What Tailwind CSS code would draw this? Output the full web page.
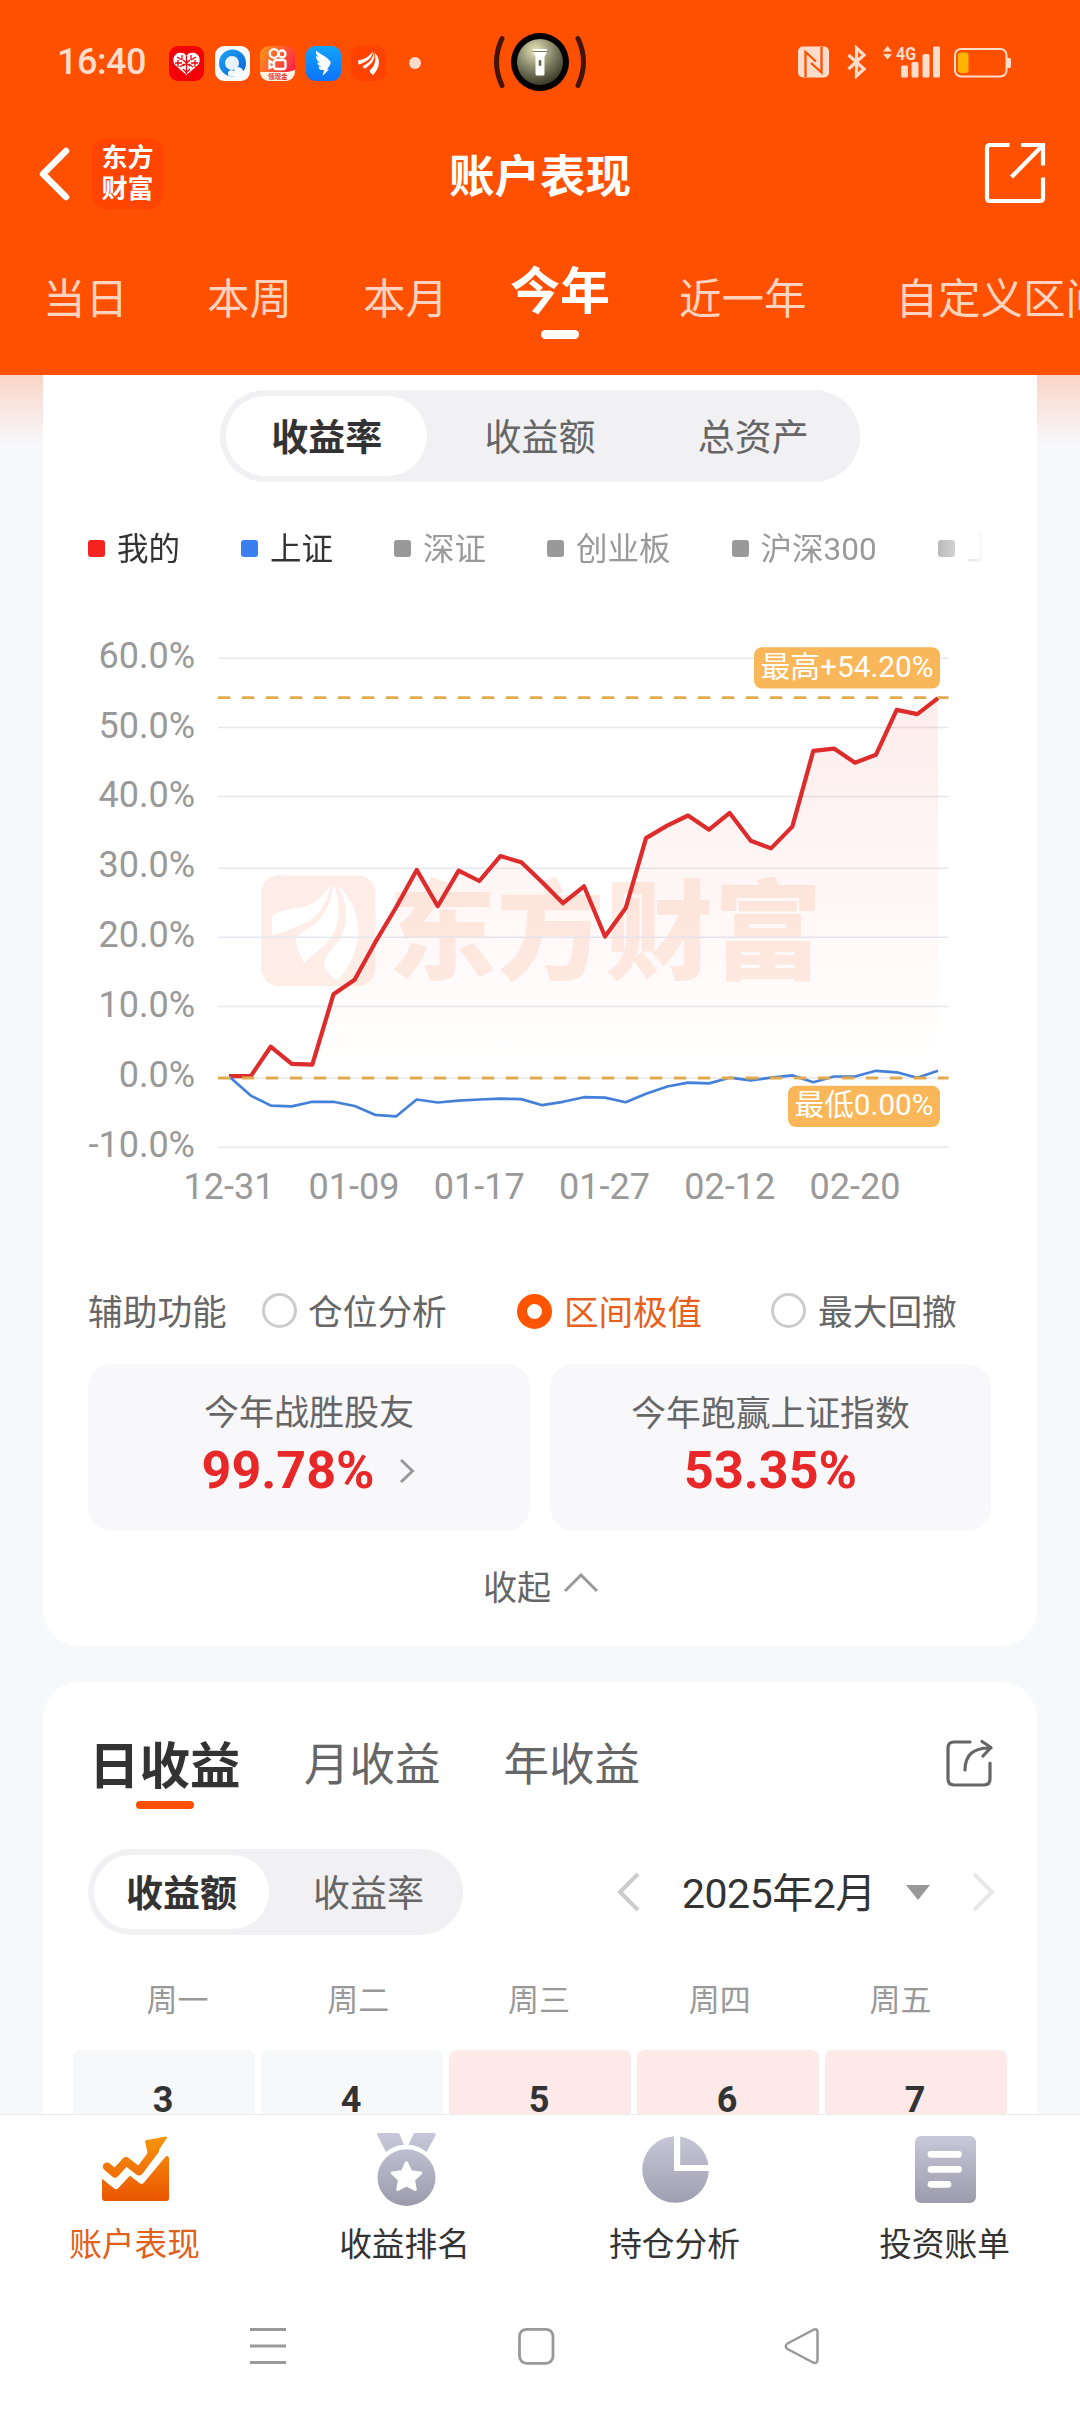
<!DOCTYPE html>
<html lang="zh-CN">
<head>
<meta charset="utf-8">
<title>账户表现</title>
<script src="https://cdn.jsdelivr.net/npm/@tailwindcss/browser@4"></script>
</head>
<body class="flex h-[2412px] w-[1080px] flex-col overflow-hidden bg-white font-['Roboto','Noto_Sans_CJK_SC',sans-serif] leading-none text-[#333] whitespace-nowrap">

<header class="h-[375px] shrink-0 overflow-hidden bg-[#ff5000] text-white">
  <!-- status bar -->
  <div class="relative flex h-[124px] items-center pl-[57px] pr-[69px] text-[#ffdccb]">
    <span class="w-[112px] text-[36px] font-medium tracking-[-0.5px]">16:40</span>
    <div class="mt-[2px] flex items-center gap-[10.5px]">
      <svg class="size-[35px]" viewBox="0 0 35 35"><rect width="35" height="35" rx="9" fill="#f40009"/><path d="M17.500 29 6 19C3 15 4 9 9 7c4-1 7 0 8.500 3C19 7 22 6 26 7c5 2 6 8 3 12z" fill="#fff"/><path d="M8 11l5 3M6 17h7M17.500 10v18M22 14l5-3M22 17h7M11 21l4-3M24 21l-4-3M13 9v5M22 9v5M9 14v7M26 14v7M14 23l3 3M21 23l-3 3M14 14l7 6M21 14l-7 6" stroke="#f40009" stroke-width="1.300" fill="none"/></svg>
      <svg class="size-[35px]" viewBox="0 0 35 35"><defs><linearGradient id="qb" x1="0" y1="0" x2="1" y2="1"><stop offset="0" stop-color="#1fa5f5"/><stop offset="1" stop-color="#0862d8"/></linearGradient></defs><rect width="35" height="35" rx="9" fill="#f7fafd"/><circle cx="17.500" cy="17" r="13.500" fill="url(#qb)"/><circle cx="17" cy="17" r="7" fill="#e9f1fa"/><path d="M14 30c-3-4 1-7 5-5 1-5 8-5 9 0 5 0 5 6 1 7z" fill="#f7fafd"/></svg>
      <svg class="size-[35px]" viewBox="0 0 35 35"><defs><linearGradient id="ks" x1="0" y1="0" x2="1" y2=".6"><stop offset="0" stop-color="#ff9a1a"/><stop offset="1" stop-color="#fb2448"/></linearGradient><clipPath id="kc"><rect width="35" height="35" rx="9"/></clipPath></defs><g clip-path="url(#kc)"><rect width="35" height="35" fill="url(#ks)"/><g fill="none" stroke="#fff" stroke-width="2.300"><circle cx="14" cy="7.500" r="4.300"/><circle cx="22" cy="8" r="3.500"/><rect x="14" y="14" width="11.500" height="9" rx="2.500"/><path d="M14 17.500l-4.500-2.500v7L14 20"/></g><path d="M0 26h28l7-2v11H0z" fill="#fff3df"/><text x="8" y="32.500" font-size="6.500" font-weight="700" fill="#e8352b" font-family="Noto Sans CJK SC">领现金</text></g></svg>
      <svg class="size-[35px]" viewBox="0 0 35 35"><defs><linearGradient id="dd" x1="0" y1="0" x2="0" y2="1"><stop offset="0" stop-color="#12a3ff"/><stop offset="1" stop-color="#0a73f8"/></linearGradient></defs><rect width="35" height="35" rx="9" fill="url(#dd)"/><path d="M10 4.500c4 4 10 5.500 13 9.500 2 1.500 2.500 3 0 6.500l-2 3h2L16.500 30l1.500-6h-3c-2-1.200-2.500-2.500-2.500-3.300l3 .3c-3-1-4-3-4.300-4.500l3.500.7c-4-2-4.500-5-4.500-7.500l3.500 2C11 10 9.500 8 10 4.500z" fill="#fff"/></svg>
      <svg class="size-[35px]" viewBox="0 0 35 35"><rect width="35" height="35" rx="9" fill="#ff4200"/><path d="M7 14.500c6-1 10-3 15-9-1 7-7 11-14.500 13zM13 22.500c-1-1-1-2-.5-3 5-2 9-6 10.500-13 2 7-3 12-9 16zM22 29c-3-2-4-4-3-5 5-4 6-9 5-17 6 6 5 15-2 22z" fill="#fff"/></svg>
      <span class="ml-[12px] size-[12px] rounded-full bg-[#ffdccb]"></span>
    </div>
    <svg class="absolute left-[490px] top-[28px] h-[68px] w-[100px]" viewBox="490 30 100 68"><defs><radialGradient id="cam" cx=".4" cy=".25" r=".8"><stop offset="0" stop-color="#e6e6b8"/><stop offset=".5" stop-color="#85856a"/><stop offset="1" stop-color="#33331f"/></radialGradient></defs><circle cx="540" cy="64" r="29" fill="#000"/><circle cx="540" cy="64" r="23" fill="url(#cam)"/><path d="M533 51h14v3.500l-2.500 4V76q0 1.500-1.500 1.500h-6q-1.500 0-1.500-1.500V58.500l-2.500-4z" fill="#fff"/><path d="M532.500 53.500h15" stroke="#77775c" stroke-width="1"/><rect x="538.700" y="62" width="2.600" height="6" rx="1.300" fill="#66664c"/><path d="M502 40.500Q491 64 502 87.500M578 40.500Q589 64 578 87.500" fill="none" stroke="#43140a" stroke-width="5" stroke-linecap="round"/></svg>
    <svg class="ml-auto h-[34px] w-[214px]" viewBox="797 47 214 34"><rect x="798" y="48.500" width="31" height="31" rx="5" fill="#ffdccb"/><path d="M805.500 79V54L816 63.500M821.500 49V74.500L811 65" fill="none" stroke="#ff5000" stroke-width="2.300"/><path d="M848.500 57 864 71l-7.500 7v-28L864 57 848.500 71" fill="none" stroke="#ffdccb" stroke-width="3.200"/><path d="M883 53.500l4.500-5.500 4.500 5.500zM883 56h9l-4.500 5.500z" fill="#ffdccb"/><text x="896" y="61.800" textLength="20" lengthAdjust="spacingAndGlyphs" font-family="Roboto" font-weight="700" font-size="19" fill="#ffdccb">4G</text><g fill="#ffdccb"><rect x="901" y="67.500" width="7" height="12" rx="1.500"/><rect x="911.500" y="64" width="7" height="15.500" rx="1.500"/><rect x="922.500" y="56" width="7" height="23.500" rx="1.500"/><rect x="933" y="48.500" width="7" height="31" rx="1.500"/><path d="M1007 60h2.500q1.500 0 1.500 2v6q0 2-1.500 2H1007z"/></g><rect x="955" y="51" width="51.500" height="27.500" rx="6" fill="none" stroke="#ffdccb" stroke-width="2"/><rect x="958" y="54.500" width="10.500" height="20.500" rx="3" fill="#ffb400"/></svg>
  </div>

  <!-- title bar -->
  <div class="flex h-[104px] items-center pl-[38px] pr-[34px]">
    <svg class="mt-[-4px] h-[56px] w-[34px]" viewBox="38 146 34 56"><path d="M66 151 43 174l23 23" fill="none" stroke="#fff" stroke-width="6.500" stroke-linecap="round" stroke-linejoin="round"/></svg>
    <div class="ml-[20px] mt-[-6px] flex h-[71px] w-[71px] flex-col items-center justify-center rounded-[14px] bg-[#ff4500] pt-[2px] text-[26px] font-bold leading-[31px]">
      <span>东方</span><span>财富</span>
    </div>
    <h1 class="ml-[286px] mt-[4px] text-[45.500px] font-bold">账户表现</h1>
    <svg class="ml-auto mt-[-6px] h-[62px] w-[62px]" viewBox="984 142 62 62"><path d="M1009.500 145H990q-3 0-3 3v50q0 3 3 3h50q3 0 3-3v-20.500M1021 145h22v20.500M1043 145l-31.500 32" fill="none" stroke="#fff" stroke-width="4.200"/></svg>
  </div>

  <!-- period tabs -->
  <nav class="flex h-[147px] items-start pt-[50px] text-[42.500px] leading-[42px] text-[#ffd3bf]">
    <span class="pl-[43px] pt-[1px]">当日</span>
    <span class="ml-[79px] pt-[1px]">本周</span>
    <span class="ml-[71px] pt-[1px]">本月</span>
    <span class="ml-[62px] mt-[-12px] flex flex-col items-center text-[50px] font-bold leading-[52px] text-white">今年<i class="mt-[12px] h-[9px] w-[38px] rounded-full bg-white"></i></span>
    <span class="ml-[69px] pt-[1px]">近一年</span>
    <span class="ml-[89px] pt-[1px]">自定义区间</span>
  </nav>
</header>

<main class="h-[1739px] shrink-0 overflow-hidden bg-[linear-gradient(#fad4c6,#f7f8fa_68px)] px-[43px]">
  <section class="h-[1271px] rounded-b-[36px] bg-white pt-[15px]">
    <div class="mx-auto grid h-[92px] w-[640px] grid-cols-3 rounded-full bg-[#f1f1f4] text-[37px] text-[#666]">
      <div class="m-[6px] flex items-center justify-center rounded-full bg-white pt-[5px] font-bold text-[#333]">收益率</div>
      <div class="flex items-center justify-center pt-[5px]">收益额</div>
      <div class="flex items-center justify-center pt-[5px]">总资产</div>
    </div>

    <div class="ml-[45px] mt-[42px] flex h-[49px] w-[894px] items-center gap-[60px] overflow-hidden text-[31.500px] text-[#999] [mask-image:linear-gradient(to_right,#000_826px,transparent_900px)]">
      <div class="flex shrink-0 items-center gap-[12px] pr-[1px] text-[#333]"><i class="size-[17px] rounded-[3px] bg-[#f52222]"></i><span class="pt-[3px]">我的</span></div>
      <div class="flex shrink-0 items-center gap-[12px] pr-[1px] text-[#333]"><i class="size-[17px] rounded-[3px] bg-[#3a7ff0]"></i><span class="pt-[3px]">上证</span></div>
      <div class="flex shrink-0 items-center gap-[12px] pr-[1px]"><i class="size-[17px] rounded-[3px] bg-[#999]"></i><span class="pt-[3px]">深证</span></div>
      <div class="flex shrink-0 items-center gap-[12px] pr-[1px]"><i class="size-[17px] rounded-[3px] bg-[#999]"></i><span class="pt-[3px]">创业板</span></div>
      <div class="flex shrink-0 items-center gap-[12px] pr-[1px]"><i class="size-[17px] rounded-[3px] bg-[#999]"></i><span class="pt-[3px]">沪深300</span></div>
      <div class="flex shrink-0 items-center gap-[12px]"><i class="size-[17px] rounded-[3px] bg-[#999]"></i><span class="pt-[3px]">上证50</span></div>
    </div>

    <!-- return curve -->
    <svg class="mt-[47px] block h-[600px] w-[994px]" viewBox="43 620 994 600" font-family="Roboto, 'Noto Sans CJK SC', sans-serif">
      <defs>
        <linearGradient id="area" x1="0" y1="698" x2="0" y2="1078" gradientUnits="userSpaceOnUse"><stop offset="0" stop-color="#f03030" stop-opacity=".09"/><stop offset="1" stop-color="#f06030" stop-opacity="0"/></linearGradient>
        <linearGradient id="wm" x1="0" y1="0" x2="0" y2="1"><stop offset="0" stop-color="#feece9"/><stop offset="1" stop-color="#feeee6"/></linearGradient>
      </defs>
      <rect x="261" y="875.200" width="114.500" height="111" rx="18" fill="url(#wm)"/>
      <g fill="#fff" transform="matrix(1 0 0 1.148 0 -91.800)">
        <path d="M330 851Q318 868 300 870.500Q283 872 273 877Q271 879 272.500 895Q287 891 300 886Q326 877 330 851Z"/>
        <path d="M334 850Q328 878 313 886Q300 893 296 897Q294 900 304 919Q308 914 320 907Q348 888 334 850Z"/>
        <path d="M338 851Q350 870 344 890Q340 899 328 911Q323 917 325 923Q327 928 338 934Q356 916 358.500 892Q358 868 338 851Z"/>
      </g>
      <text x="388" y="971" textLength="434" font-size="108" font-weight="900" fill="#feece4">东方财富</text>
      <path d="M218 658.300H948.500M218 727.500H948.500M218 796.400H948.500M218 868.300H948.500M218 937.200H948.500M218 1006.500H948.500M218 1078H948.500M218 1147.300H948.500" stroke="#e6e7ef" stroke-width="1.500"/>
      <path fill="url(#area)" d="M230 1076.100 250.800 1076.100 270.700 1046.700 291.700 1063.900 312.300 1064.700 333.500 994.200 354.600 979.700 375.300 942.200 396.300 907 416.700 869.900 437.700 906.200 458.700 870.600 479.300 881 500.300 856.100 521.300 862.200 542 882.100 563 903.200 584 886.300 605 936.500 625.700 908.100 646 838.100 666.700 825.900 688 815.500 709 829.700 729.700 812.900 750.700 840.800 771 848.400 792.300 826.600 813.300 750.900 834 748.600 855 762.700 876 754.700 896.700 709.900 917.300 714.100 938 698.100V1078H230Z"/>
      <polyline fill="none" stroke="#de2c2c" stroke-width="4.200" stroke-linejoin="round" points="229,1076.100 250.800,1076.100 270.700,1046.700 291.700,1063.900 312.300,1064.700 333.500,994.200 354.600,979.700 375.300,942.200 396.300,907 416.700,869.900 437.700,906.200 458.700,870.600 479.300,881 500.300,856.100 521.300,862.200 542,882.100 563,903.200 584,886.300 605,936.500 625.700,908.100 646,838.100 666.700,825.900 688,815.500 709,829.700 729.700,812.900 750.700,840.800 771,848.400 792.300,826.600 813.300,750.900 834,748.600 855,762.700 876,754.700 896.700,709.900 917.300,714.100 938,698.100"/>
      <polyline fill="none" stroke="#4480d8" stroke-width="2.700" stroke-linejoin="round" points="230,1077.300 250.700,1095.600 271,1105.600 291.700,1106.400 312.300,1101.800 333.300,1101.800 354.700,1106 375,1114.800 396.300,1116.300 416.700,1099.500 437.700,1102.500 458.700,1100.600 479.300,1099.500 500.300,1098.700 521.300,1099.100 542.300,1105.200 563,1101.800 584,1097.200 605,1097.600 625.700,1102.200 646,1093.700 667.300,1086.500 688,1082.600 709,1083.400 729.700,1077.700 750.700,1080.300 771,1077.700 792.300,1075.400 813.300,1082.300 834,1076.500 855,1076.500 876,1070.800 896.700,1072.300 917.300,1077.700 938,1070.800"/>
      <path d="M218 697.700H948.500M218 1078H948.500" stroke="#e2aa4e" stroke-width="2.800" stroke-dasharray="12.300 11.700"/>
      <g fill="#fab759"><rect x="754" y="647.200" width="186" height="41.300" rx="8"/><rect x="788" y="1085.700" width="152" height="41.300" rx="8"/></g>
      <g fill="#fff" font-size="30">
        <text x="760.500" y="677.400" textLength="173" lengthAdjust="spacingAndGlyphs">最高+54.20%</text>
        <text x="794.500" y="1115" textLength="139" lengthAdjust="spacingAndGlyphs">最低0.00%</text>
      </g>
      <g fill="#999" font-size="36" text-anchor="end">
        <text x="195" y="667.800">60.0%</text>
        <text x="195" y="737.500">50.0%</text>
        <text x="195" y="806.900">40.0%</text>
        <text x="195" y="876.700">30.0%</text>
        <text x="195" y="946.700">20.0%</text>
        <text x="195" y="1016.500">10.0%</text>
        <text x="195" y="1086.500">0.0%</text>
        <text x="195" y="1156.500">-10.0%</text>
      </g>
      <g fill="#999" font-size="36" text-anchor="middle">
        <text x="229" y="1198.500">12-31</text>
        <text x="354" y="1198.500">01-09</text>
        <text x="479.300" y="1198.500">01-17</text>
        <text x="604.500" y="1198.500">01-27</text>
        <text x="729.700" y="1198.500">02-12</text>
        <text x="855" y="1198.500">02-20</text>
      </g>
    </svg>

    <!-- helper options -->
    <div class="mt-[65px] flex h-[52px] items-center pl-[45px] text-[34.700px] text-[#666]">
      <span class="w-[174px] pt-[4px]">辅助功能</span>
      <div class="flex w-[255px] items-center gap-[11px]"><i class="size-[35px] rounded-full border-[3px] border-[#ccc]"></i><span class="pt-[4px]">仓位分析</span></div>
      <div class="flex w-[254px] items-center gap-[12px] text-[#e8601c]"><i class="size-[35px] rounded-full border-[10px] border-[#ff5500]"></i><span class="pt-[4px] text-[34.500px]">区间极值</span></div>
      <div class="flex items-center gap-[12px]"><i class="size-[35px] rounded-full border-[3px] border-[#ccc]"></i><span class="pt-[4px]">最大回撤</span></div>
    </div>

    <div class="ml-[45px] mr-[46px] mt-[27px] grid h-[167px] grid-cols-[442px_441px] gap-[20px] text-center">
      <div class="rounded-[24px] bg-[#f8f8fa] pt-[32px]">
        <div class="text-[35px] leading-[36px] text-[#666]">今年战胜股友</div>
        <div class="mt-[13px] flex h-[52px] items-center justify-center text-[52px] font-bold text-[#e82828]"><span>99.78%</span>
          <svg class="ml-[24px] h-[28px] w-[18px]" viewBox="0 0 18 28"><path d="M3 3l11.500 11L3 25" fill="none" stroke="#999" stroke-width="3"/></svg></div>
      </div>
      <div class="rounded-[24px] bg-[#f8f8fa] pt-[32px]">
        <div class="text-[34.800px] leading-[36px] text-[#666]">今年跑赢上证指数</div>
        <div class="mt-[13px] flex h-[52px] items-center justify-center text-[52px] font-bold text-[#e82828]"><span>53.35%</span></div>
      </div>
    </div>

    <div class="mt-[31px] flex h-[50px] items-center justify-center pl-[2px] text-[34px] text-[#666]"><span class="pt-[1px]">收起</span>
      <svg class="ml-[12px] mt-[-8px] h-[24px] w-[36px]" viewBox="0 0 36 24"><path d="M2 20 18 4l16 16" fill="none" stroke="#999" stroke-width="3"/></svg></div>
  </section>

  <section class="mt-[36px] h-[600px] rounded-t-[36px] bg-white">
    <div class="flex h-[167px] items-start pl-[46px] pr-[43px] pt-[59px] text-[45.500px] leading-[50px] text-[#666]">
      <div class="flex flex-col items-center text-[50.500px] font-bold text-[#333]"><span class="relative top-px">日收益</span><i class="mt-[10px] h-[8px] w-[58px] rounded-full bg-[#ff5000]"></i></div>
      <span class="ml-[63.5px]">月收益</span>
      <span class="ml-[63px]">年收益</span>
      <svg class="ml-auto mt-[-3px] h-[50px] w-[50px]" viewBox="944 1738 50 50"><g fill="none" stroke="#666" stroke-width="3.200" stroke-linecap="round"><path d="M970 1742H954q-6 0-6 6V1779q0 6 6 6H984q6 0 6-6V1763"/><path d="M965 1770c0-15 8-22.500 26-22M982 1741.500l9 6-8 8.500" stroke-linejoin="round"/></g></svg>
    </div>

    <div class="flex items-center pl-[45px] pr-[41px]">
      <div class="flex h-[86px] w-[375px] rounded-full bg-[#f1f1f4] text-[37px] text-[#666]">
        <div class="m-[6px] flex w-[175px] items-center justify-center rounded-full bg-white pt-[5px] font-bold text-[#333]">收益额</div>
        <div class="flex flex-1 items-center justify-center pr-[1px] pt-[5px]">收益率</div>
      </div>
      <svg class="ml-[153px] h-[40px] w-[24px]" viewBox="0 0 24 40"><path d="M22 2 4 20l18 18" fill="none" stroke="#ccc" stroke-width="4"/></svg>
      <span class="ml-[42px] mt-[5px] text-[41px] tracking-[-0.500px]">2025年2月</span>
      <svg class="ml-auto mr-[42px] h-[15px] w-[24px]" viewBox="0 0 24 15"><path d="M0 0h24L12 15z" fill="#999"/></svg>
      <svg class="h-[40px] w-[24px]" viewBox="0 0 24 40"><path d="M2 2l18 18L2 38" fill="none" stroke="#e8e8e8" stroke-width="4"/></svg>
    </div>

    <div class="ml-[44px] mr-[46px] mt-[49px] grid h-[34px] grid-cols-5 text-center text-[31px] leading-[34px] text-[#999]">
      <span>周一</span><span>周二</span><span>周三</span><span>周四</span><span>周五</span>
    </div>

    <div class="mx-[30px] mt-[32px] grid grid-cols-5 gap-[6px] text-center text-[36px] font-bold leading-[42px]">
      <div class="h-[150px] rounded-[8px] bg-[#f7f8fa] pr-[2px] pt-[29px]">3</div>
      <div class="h-[150px] rounded-[8px] bg-[#f7f8fa] pr-[2px] pt-[29px]">4</div>
      <div class="h-[150px] rounded-[8px] bg-[#fde9e8] pr-[2px] pt-[29px]">5</div>
      <div class="h-[150px] rounded-[8px] bg-[#fde9e8] pr-[2px] pt-[29px]">6</div>
      <div class="h-[150px] rounded-[8px] bg-[#fde9e8] pr-[2px] pt-[29px]">7</div>
    </div>
  </section>
</main>

<footer class="flex-1 border-t border-[#eaeaea] bg-white">
  <svg class="absolute size-0"><defs><linearGradient id="gy" x1="0" y1="0" x2="0" y2="1"><stop offset="0" stop-color="#c9c8d8"/><stop offset="1" stop-color="#9c9bab"/></linearGradient><linearGradient id="og" x1="0" y1="2137" x2="0" y2="2204" gradientUnits="userSpaceOnUse"><stop offset="0" stop-color="#f8960c"/><stop offset="1" stop-color="#ea5500"/></linearGradient><linearGradient id="gu" x1="0" y1="2134" x2="0" y2="2209" gradientUnits="userSpaceOnUse"><stop offset="0" stop-color="#c9c8d8"/><stop offset="1" stop-color="#9c9bab"/></linearGradient></defs></svg>
  <nav class="grid h-[165px] grid-cols-4 text-center text-[32.700px] leading-[36px]">
    <div class="flex flex-col items-center text-[#e0601c]">
      <svg class="mt-[17px] h-[80px] w-[80px]" viewBox="95 2132 80 80"><g transform="matrix(1 0 0 .97 0 63.100)" fill="url(#og)" stroke="url(#og)" stroke-linejoin="round"><path stroke-width="2" d="M103 2182l1-1 12.500 9 13.500-14 11.500 9L166 2159q2-1 2 1v41q0 2-2 2h-61q-2 0-2-2z"/><path fill="none" stroke="#fff" stroke-width="6.500" d="M101 2176l15 12.500 13.500-15 12 9.500 25-31"/><path fill="none" stroke-width="8.500" stroke-linecap="round" d="M107 2168.500l8 7 11-12.500 13 10.500 16-22"/><path stroke-width="2" d="M146 2142.500l20-4-15.500 24z"/></g></svg>
      <span class="mt-[15px] pr-[1px]">账户表现</span>
    </div>
    <div class="flex flex-col items-center">
      <svg class="mt-[17px] h-[80px] w-[80px]" viewBox="365 2132 80 80"><g transform="matrix(1 0 0 .976 0 49.700)"><g fill="url(#gu)"><path d="M378.500 2134.500h19q1.500 0 2 1l4.500 11q-11 1-18 7.500l-8.800-17.500q-.5-2 1.300-2zM434.500 2134.500h-19q-1.500 0-2 1l-5 11q11 1 18 7.500l9.300-17.500q.5-2-1.300-2z"/><circle cx="406.500" cy="2180.300" r="29"/></g><path stroke="#fff" stroke-width="3" stroke-linejoin="round" fill="#fff" d="M406.500 2165l4.300 9.200 10 1.300-7.300 7 1.800 10-8.800-4.800-8.800 4.800 1.800-10-7.300-7 10-1.300z"/></g></svg>
      <span class="mt-[15px] pr-[1px]">收益排名</span>
    </div>
    <div class="flex flex-col items-center">
      <svg class="mt-[17px] h-[80px] w-[80px]" viewBox="635 2132 80 80"><g fill="url(#gu)"><path d="M674 2136.200A33.300 33.300 0 1 0 708.800 2171H674z"/><path d="M680.200 2136.500A33.300 33.300 0 0 1 708.400 2165H680.200z"/></g></svg>
      <span class="mt-[15px] pr-[1px]">持仓分析</span>
    </div>
    <div class="flex flex-col items-center">
      <svg class="mt-[17px] h-[80px] w-[80px]" viewBox="905 2132 80 80"><rect x="915" y="2136" width="61" height="67" rx="6" fill="url(#gy)"/><path d="M931 2154.300h27.500M931 2169.300h27.500M931 2184.300h17" stroke="#fff" stroke-width="6.800" stroke-linecap="round"/></svg>
      <span class="mt-[15px] pr-[1px]">投资账单</span>
    </div>
  </nav>
  <!-- system navigation -->
  <div class="mt-[45px] flex items-center pl-[249px]">
    <svg class="h-[42px] w-[38px]" viewBox="249 2333 38 42"><path d="M250 2337.500h36M250 2354h36M250 2370.500h36" stroke="#999" stroke-width="3"/></svg>
    <svg class="ml-[229px] h-[42px] w-[40px]" viewBox="516 2333 40 42"><rect x="519.500" y="2337.300" width="33.500" height="34" rx="7" fill="none" stroke="#999" stroke-width="2.800"/></svg>
    <svg class="ml-[227px] h-[42px] w-[40px]" viewBox="783 2333 40 42"><path d="M787.500 2351.500 813 2338q4.500-2 4.500 2v28q0 4-4.500 2.500L787.500 2357q-3.500-3 0-5.500z" fill="none" stroke="#999" stroke-width="2.500" stroke-linejoin="round"/></svg>
  </div>
</footer>
</body>
</html>
